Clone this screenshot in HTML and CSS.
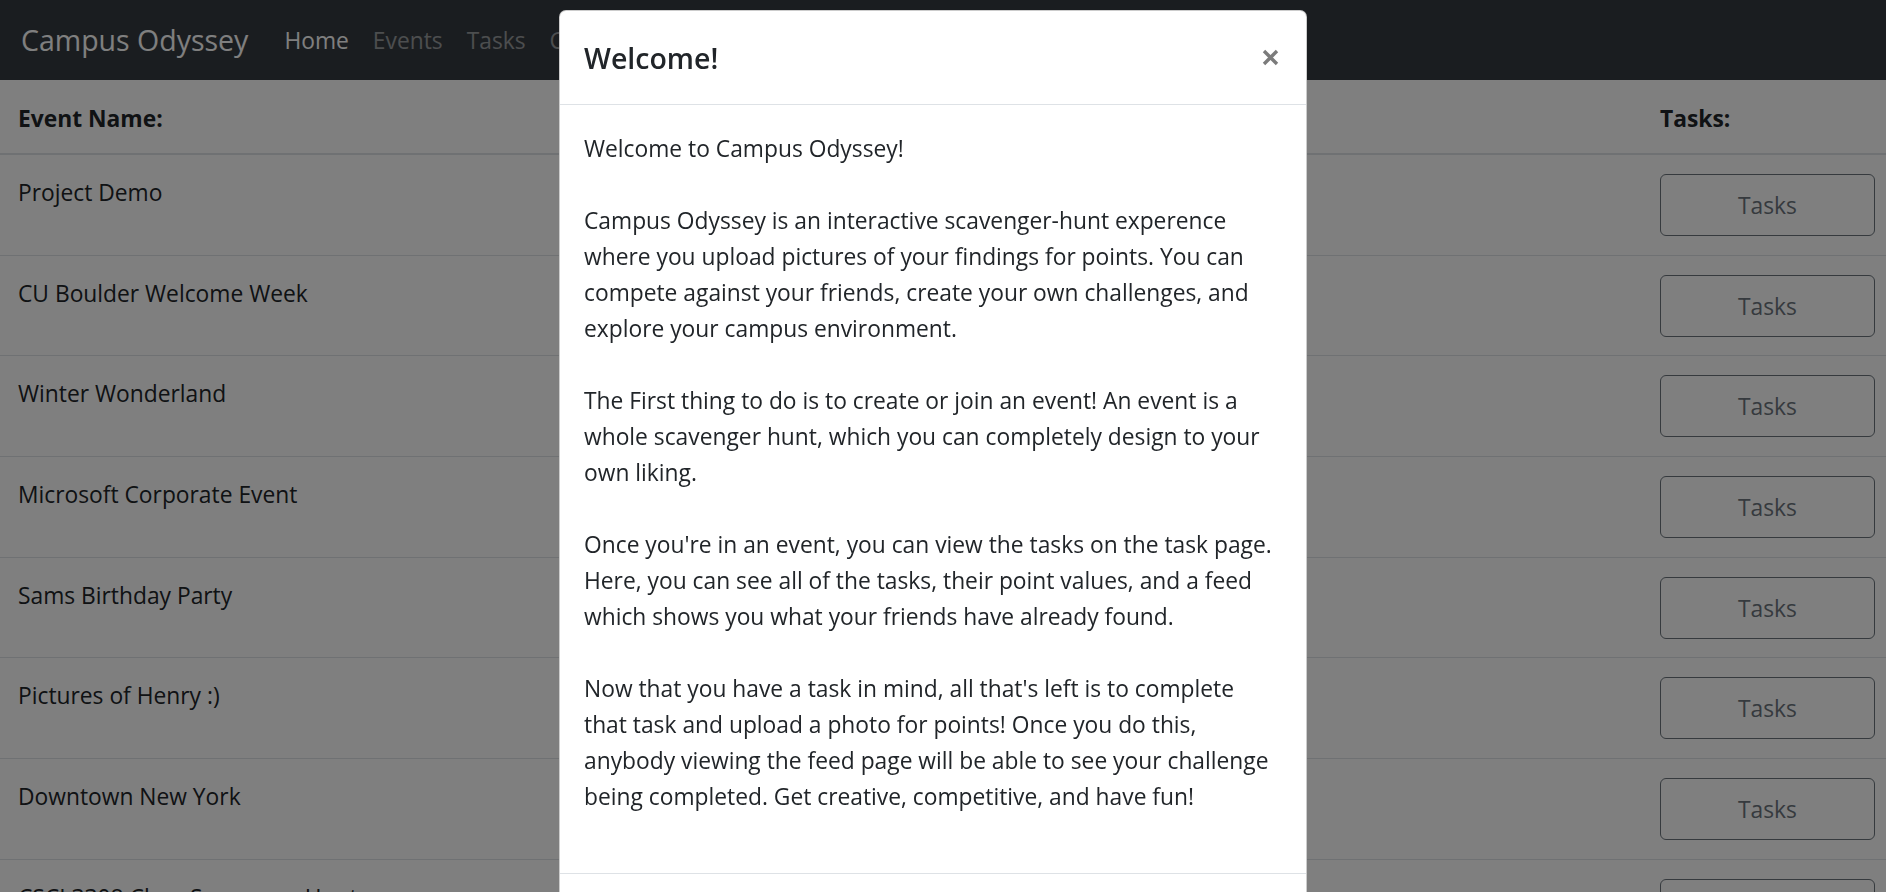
FILE: index.html
```html
<!DOCTYPE html>
<html lang="en">
<head>
<meta charset="utf-8">
<title>Campus Odyssey</title>
<link rel="stylesheet" href="styles.css">
</head>
<body class="modal-open">
  <nav class="navbar">
    <a class="brand" href="#">Campus Odyssey</a>
    <ul class="nav-links">
      <li><a class="active" href="#">Home</a></li>
      <li><a href="#">Events</a></li>
      <li><a href="#">Tasks</a></li>
      <li><a href="#">Create</a></li>
    </ul>
  </nav>

  <table class="events">
    <colgroup>
      <col class="col-name">
      <col class="col-tasks">
    </colgroup>
    <thead>
      <tr><th>Event Name:</th><th>Tasks:</th></tr>
    </thead>
    <tbody>
      <tr><td class="name">Project Demo</td><td><button class="btn-outline">Tasks</button></td></tr>
      <tr><td class="name">CU Boulder Welcome Week</td><td><button class="btn-outline">Tasks</button></td></tr>
      <tr><td class="name">Winter Wonderland</td><td><button class="btn-outline">Tasks</button></td></tr>
      <tr><td class="name">Microsoft Corporate Event</td><td><button class="btn-outline">Tasks</button></td></tr>
      <tr><td class="name">Sams Birthday Party</td><td><button class="btn-outline">Tasks</button></td></tr>
      <tr><td class="name">Pictures of Henry :)</td><td><button class="btn-outline">Tasks</button></td></tr>
      <tr><td class="name">Downtown New York</td><td><button class="btn-outline">Tasks</button></td></tr>
      <tr><td class="name">CSCI 3308 Class Scavenger Hunt</td><td><button class="btn-outline">Tasks</button></td></tr>
    </tbody>
  </table>

  <div class="backdrop"></div>

  <div class="modal" role="dialog">
    <div class="modal-header">
      <h5 class="modal-title">Welcome!</h5>
      <button class="close" aria-label="Close">
        <svg width="17" height="17" viewBox="0 0 17 17" aria-hidden="true"><path d="M2 2 L15 15 M15 2 L2 15"/></svg>
      </button>
    </div>
    <div class="modal-body">
      <p>Welcome to Campus Odyssey!</p>
      <p>Campus Odyssey is an interactive scavenger-hunt experence<br>where you upload pictures of your findings for points. You can<br>compete against your friends, create your own challenges, and<br>explore your campus environment.</p>
      <p>The First thing to do is to create or join an event! An event is a<br>whole scavenger hunt, which you can completely design to your<br>own liking.</p>
      <p>Once you're in an event, you can view the tasks on the task page.<br>Here, you can see all of the tasks, their point values, and a feed<br>which shows you what your friends have already found.</p>
      <p>Now that you have a task in mind, all that's left is to complete<br>that task and upload a photo for points! Once you do this,<br>anybody viewing the feed page will be able to see your challenge<br>being completed. Get creative, competitive, and have fun!</p>
    </div>
    <div class="modal-footer">
      <button class="btn-secondary">Close</button>
    </div>
  </div>
</body>
</html>
```

FILE: styles.css
```css
html, body {
  margin: 0;
  padding: 0;
  height: 100%;
  overflow: hidden;
}

body {
  font-family: "Open Sans", "Noto Sans", sans-serif;
  font-size: 22.8px;
  line-height: 36px;
  color: #212529;
  background: #ffffff;
}

/* ---------- navbar ---------- */
.navbar {
  display: flex;
  align-items: center;
  height: 80px;
  padding: 0 21px;
  background: #343a40;
  box-sizing: border-box;
}

.brand {
  font-size: 28.5px;
  line-height: 45px;
  color: #ffffff;
  text-decoration: none;
  margin-right: 24px;
}

.nav-links {
  display: flex;
  list-style: none;
  margin: 0;
  padding: 2px 0 0;
}

.nav-links a {
  display: block;
  padding: 0 12px;
  color: rgba(255, 255, 255, 0.5);
  text-decoration: none;
}

.nav-links a.active {
  color: #ffffff;
}

/* ---------- table ---------- */
.events {
  width: 100%;
  border-collapse: collapse;
  table-layout: fixed;
}

.col-tasks { width: 244px; }

.events th {
  text-align: left;
  font-weight: 700;
  padding: 21px 18px 16px;
  border-bottom: 2px solid #dee2e6;
  vertical-align: top;
}

.events td {
  padding: 19px 11px 18.7px 18px;
  border-bottom: 1px solid #dee2e6;
  vertical-align: top;
  white-space: nowrap;
}

.events td.name {
  padding-top: 20px;
}

.btn-outline {
  display: block;
  width: 215px;
  height: 62px;
  padding: 2px 0 0;
  font-family: inherit;
  font-size: 22.8px;
  line-height: 36px;
  color: #6c757d;
  background: transparent;
  border: 1px solid #6c757d;
  border-radius: 6px;
}

/* ---------- modal ---------- */
.backdrop {
  position: fixed;
  inset: 0;
  background: rgba(0, 0, 0, 0.5);
}

.modal {
  position: fixed;
  top: 10px;
  left: 559px;
  width: 748px;
  box-sizing: border-box;
  background: #ffffff;
  border: 1px solid rgba(0, 0, 0, 0.2);
  border-radius: 7px;
}

.modal-header {
  display: flex;
  align-items: flex-start;
  justify-content: space-between;
  padding: 25px 24px 23px;
  border-bottom: 1px solid #dee2e6;
}

.modal-title {
  margin: 0;
  font-size: 28.5px;
  line-height: 45px;
  font-weight: 600;
  color: #212529;
}

.close {
  display: flex;
  align-items: center;
  justify-content: center;
  height: 45px;
  padding: 0;
  margin: -1px 3px 0 0;
  background: transparent;
  border: 0;
}

.close svg {
  display: block;
}

.close path {
  stroke: #7b7b7b;
  stroke-width: 3.4;
  fill: none;
}

.modal-body {
  padding: 26px 24px 22px;
}

.modal-body p {
  margin: 0 0 36px;
  white-space: nowrap;
}

.modal-footer {
  display: flex;
  justify-content: flex-end;
  padding: 18px 24px;
  border-top: 1px solid #dee2e6;
}

.btn-secondary {
  font-family: inherit;
  font-size: 22.8px;
  line-height: 36px;
  padding: 9px 18px;
  color: #ffffff;
  background: #6c757d;
  border: 1px solid #6c757d;
  border-radius: 6px;
}
```
